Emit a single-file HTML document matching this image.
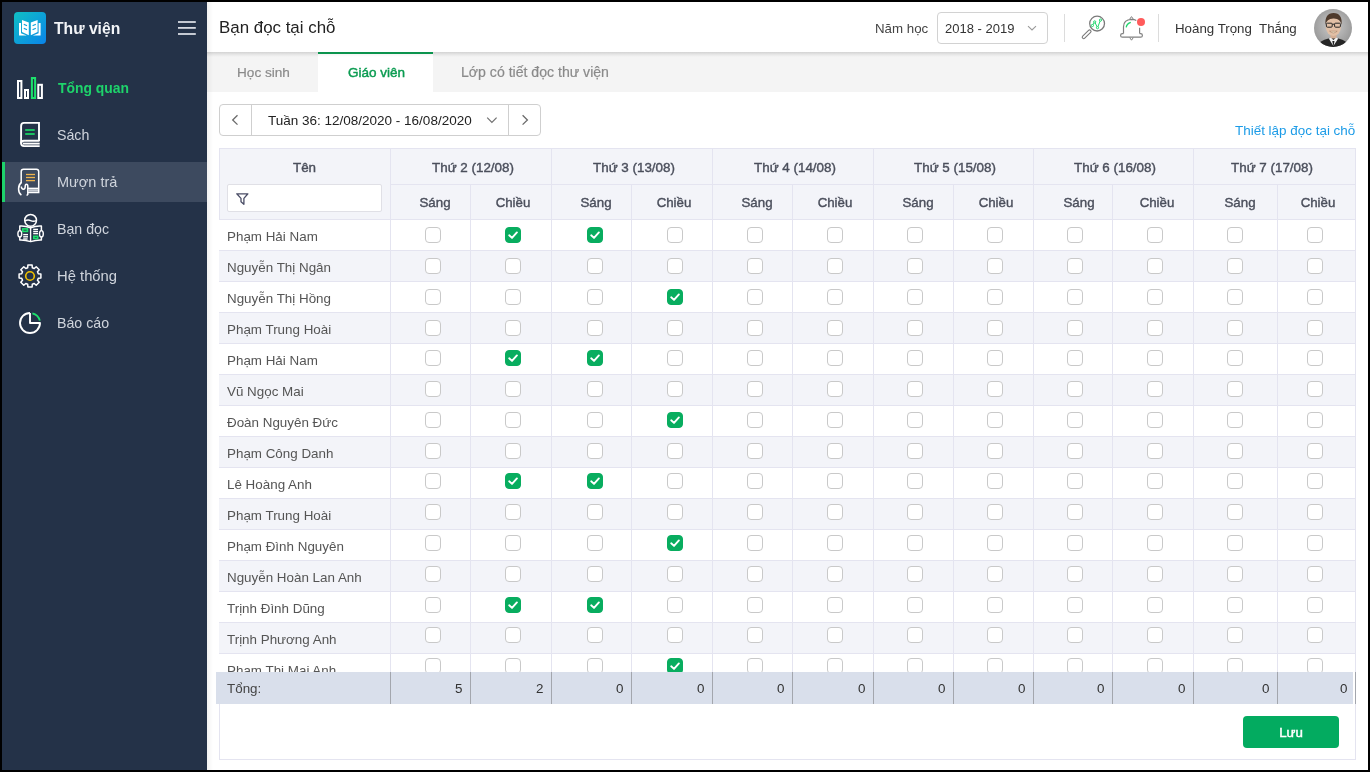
<!DOCTYPE html><html><head><meta charset="utf-8"><title>Bạn đọc tại chỗ</title><style>html,body{margin:0;padding:0}
body{width:1370px;height:772px;background:#000;position:relative;overflow:hidden;font-family:"Liberation Sans",sans-serif;}
.abs{position:absolute}
.txt{position:absolute;white-space:pre;line-height:20px}
#side{position:absolute;left:2px;top:2px;width:205px;height:768px;background:#243248}
#main{position:absolute;left:207px;top:2px;width:1161px;height:768px;background:#fff}
.mi{position:absolute;left:57px;font-size:14.2px;color:#cfd4dc;line-height:20px;white-space:pre}
.active-row{position:absolute;left:2px;top:162px;width:205px;height:40px;background:#3d4a5f}
.active-bar{position:absolute;left:2px;top:162px;width:3px;height:40px;background:#1ed36b}
#hdr{position:absolute;left:207px;top:2px;width:1161px;height:50px;background:#fff;z-index:2}
#tabs{position:absolute;left:207px;top:52px;width:1161px;height:40px;background:#f4f4f4;box-shadow:inset 0 4px 4px -3px rgba(0,0,0,0.10)}
.tab{position:absolute;top:62px;font-size:13.6px;color:#8a8a8a;-webkit-text-stroke:0.2px #8a8a8a;line-height:20px;white-space:pre}
.tabact{position:absolute;left:318px;top:52px;width:115px;height:40px;background:#fff;border-top:2px solid #0c9c52;box-sizing:border-box}
.sidesh{position:absolute;left:207px;top:2px;width:6px;height:768px;background:linear-gradient(to right,rgba(0,0,0,0.05),rgba(0,0,0,0));z-index:3}
.week{position:absolute;left:219px;top:104px;width:322px;height:32px;border:1px solid #cfcfcf;border-radius:4px;box-sizing:border-box;background:#fff}
.card{position:absolute;left:219px;top:148px;width:1137px;height:612px;border:1px solid #e4e4f0;box-sizing:border-box;background:#fff}
.thead{position:absolute;left:220px;top:149px;width:1135px;height:70px;background:#f3f4f9}
.hl{position:absolute;height:1px;background:#e4e4f0}
.vl{position:absolute;width:1px;background:#e4e4f0}
.th{position:absolute;text-align:center;font-size:13.4px;font-weight:normal;-webkit-text-stroke:0.4px #4b4f5c;color:#4b4f5c;line-height:20px;white-space:pre}
.th2{position:absolute;text-align:center;font-size:13.3px;font-weight:normal;-webkit-text-stroke:0.4px #4b4f5c;color:#4b4f5c;line-height:20px;white-space:pre}
.filter{position:absolute;left:227px;top:184px;width:155px;height:28px;border:1px solid #e0e0e6;border-radius:2px;box-sizing:border-box;background:#fff}
.tbody{position:absolute;left:219px;top:219px;width:1137px;height:453px;overflow:hidden}
.row{position:absolute;left:0;width:1136px;height:31px;box-sizing:border-box;border-top:1px solid #e4e4f0;background:#fff}
.row.alt{background:#f3f4f9}
.nm{position:absolute;left:8px;top:7px;font-size:13.4px;color:#555;line-height:20px;white-space:pre}
.cb{position:absolute;top:7px;width:16px;height:16px;box-sizing:border-box;border:1px solid #c9c9c9;border-radius:4px;background:#fff}
.cb.on{background:#08ad5f;border-color:#08ad5f}
.cb svg{position:absolute;left:-1px;top:-1px}
.tfoot{position:absolute;left:216px;top:672px;width:1137px;height:32px;background:#d9dfeb}
.ft{position:absolute;top:6.7px;font-size:13.4px;color:#444;line-height:20px;white-space:pre}
.fv{position:absolute;top:6.7px;font-size:13.4px;color:#333;line-height:20px;white-space:pre}
.fvl{position:absolute;top:0;width:1px;height:32px;background:#a3a6ad}
.btn{position:absolute;left:1243px;top:716px;width:96px;height:32px;background:#03ab60;border-radius:4px;color:#fff;font-weight:normal;-webkit-text-stroke:0.45px #fff;font-size:13.3px;text-align:center;line-height:34px;overflow:hidden}
.txt,.mi,.tab,.th,.th2,.nm,.ft,.fv,.btn{will-change:transform}
</style></head><body>
<div id="side"></div>
<div class="active-row"></div>
<div class="active-bar"></div>
<div class="abs" style="left:14px;top:12px;width:32px;height:32px;border-radius:4px;background:linear-gradient(135deg,#10c0c4,#0a84ea)"></div>
<svg class="abs" style="left:0;top:0" width="207" height="350" viewBox="0 0 207 350">
 <!-- logo book -->
 <g fill="#fff">
  <path d="M22 20 L28.8 22.4 L28.8 35.3 L22 32 Z"/>
  <path d="M37.6 20 L30.8 22.4 L30.8 35.3 L37.6 32 Z"/>
  <path d="M19 23 H21 V33.2 L26.8 35.5 L19 35.5 Z"/>
  <path d="M40.6 23 H38.6 V33.2 L32.8 35.5 L40.6 35.5 Z"/>
 </g>
 <g stroke="#0aa2d8" stroke-width="1.1" fill="none" stroke-linecap="round">
  <path d="M24.2 24.4 L26.6 25.6"/><path d="M24.2 28.4 L26.6 29.6"/>
  <path d="M35.4 24.4 L33 25.6"/><path d="M35.4 28.4 L33 29.6"/>
 </g>
 <!-- hamburger -->
 <g fill="#d6dae1">
  <rect x="178" y="21.1" width="17.8" height="1.8"/>
  <rect x="178" y="27.0" width="17.8" height="1.8"/>
  <rect x="178" y="33.1" width="17.8" height="1.8"/>
 </g>
 <!-- chart -->
 <g fill="none" stroke-width="2">
  <rect x="18" y="81" width="3.4" height="17" stroke="#fff"/>
  <rect x="25" y="90" width="3" height="8" stroke="#fff"/>
  <rect x="31.9" y="78" width="3.2" height="20" stroke="#1de06c"/>
  <rect x="38.3" y="84.8" width="3.6" height="13.2" stroke="#fff"/>
 </g>
 <!-- book (Sach) -->
 <g fill="none" stroke="#fff" stroke-width="1.9">
  <path d="M39 141 V122.9 H24 Q21.1 122.9 21.1 126 V143 Q21.1 146.1 24 146.1 H39.7"/>
  <path d="M21.1 143.5 Q21.1 140.8 24 140.8 H39.5"/>
  <path d="M23 143.6 H39.7"/>
 </g>
 <g stroke="#1cc763" stroke-width="1.9">
  <path d="M25.2 130 H34.7"/><path d="M25.2 134 H34.7"/>
 </g>
 <!-- muon tra -->
 <g fill="none" stroke="#fff" stroke-width="1.5">
  <path d="M21.2 183 V171.6 Q21.2 169.3 23.5 169.3 H36.4 Q38.7 169.3 38.7 171.6 V192.6 H27.6"/>
  <path d="M27.6 188.4 H38.7"/>
  <path d="M21.5 182.5 C17.6 185 17.6 192.5 21.4 195.2"/>
  <path d="M21.3 186.5 Q21.5 189.3 23.4 189.3 Q25.2 189.3 25.2 186.6 Q25.2 184.3 26.5 184.3 Q27.8 184.3 27.8 186.3 V194.5 L26.6 195.5"/>
 </g>
 <rect x="28" y="189.2" width="10" height="2.5" fill="#c8ccd3"/>
 <g stroke="#f0b44c" stroke-width="1.3">
  <path d="M26 174.5 H35"/><path d="M26 177.5 H35"/><path d="M26 180.6 H35"/>
 </g>
 <!-- ban doc -->
 <g fill="none" stroke="#fff" stroke-width="1.5">
  <circle cx="30.6" cy="220.3" r="5.9"/>
  <path d="M24.9 221 Q27.8 219.2 30.6 220.6 Q33.4 222 36.3 220.6"/>
 </g>
 <path d="M19.8 237 V226 Q25.2 225.6 30.6 227.8 Q36 225.6 41.4 226 V240 Q36 239.8 30.6 241.6 Q25.2 239.8 19.8 240 V237 Z" fill="#243248" stroke="#fff" stroke-width="1.5" stroke-linejoin="round"/>
 <g fill="none" stroke="#fff" stroke-width="1.4">
  <path d="M30.6 227.8 V241.6"/>
  <ellipse cx="19.8" cy="233.8" rx="1.9" ry="3.2" fill="#243248"/>
  <ellipse cx="41.4" cy="233.8" rx="1.9" ry="3.2" fill="#243248"/>
  <path d="M23.2 234.6 H28"/><path d="M23.2 236.8 H28"/><path d="M23.2 239 H27.6"/>
  <path d="M33.2 229.4 H38"/><path d="M33.2 231.5 H38"/><path d="M33.2 233.6 H38"/>
 </g>
 <g fill="none" stroke="#1de06c" stroke-width="1.6">
  <rect x="22.7" y="228.9" width="4.8" height="2.5"/>
  <rect x="33.8" y="236.3" width="3.9" height="2.2"/>
 </g>
 <!-- gear -->
 <path d="M27.70 267.71 L27.88 265.10 L32.12 265.10 L32.30 267.71 L34.23 268.51 L36.21 266.80 L39.20 269.79 L37.49 271.77 L38.29 273.70 L40.90 273.88 L40.90 278.12 L38.29 278.30 L37.49 280.23 L39.20 282.21 L36.21 285.20 L34.23 283.49 L32.30 284.29 L32.12 286.90 L27.88 286.90 L27.70 284.29 L25.77 283.49 L23.79 285.20 L20.80 282.21 L22.51 280.23 L21.71 278.30 L19.10 278.12 L19.10 273.88 L21.71 273.70 L22.51 271.77 L20.80 269.79 L23.79 266.80 L25.77 268.51Z" fill="none" stroke="#fff" stroke-width="1.5" stroke-linejoin="round"/>
 <circle cx="30" cy="276" r="4.3" fill="none" stroke="#f2c200" stroke-width="1.6"/>
 <!-- pie -->
 <path d="M30 313 V323 H40 A10 10 0 1 1 30 313" fill="none" stroke="#fff" stroke-width="1.9" stroke-linejoin="round"/>
 <path d="M32.4 313.3 A10 10 0 0 1 39.8 320.6" fill="none" stroke="#1de06c" stroke-width="1.8"/>
</svg>
<div class="txt" style="left:54px;top:19.2px;font-size:15.7px;font-weight:bold;color:#f2f4f7">Thư viện</div>
<div class="mi" style="left:58px;top:78.2px;color:#1ed36b;font-weight:bold;font-size:13.9px">Tổng quan</div>
<div class="mi" style="top:124.9px">Sách</div>
<div class="mi" style="top:171.9px;font-size:14.5px">Mượn trả</div>
<div class="mi" style="top:219px">Bạn đọc</div>
<div class="mi" style="top:266.3px;font-size:14.8px">Hệ thống</div>
<div class="mi" style="top:312.9px">Báo cáo</div>

<div id="main"></div>
<div id="tabs"></div>
<div class="tabact"></div>
<div id="hdr"></div>
<div class="abs" style="left:207px;top:52px;width:1161px;height:5px;background:linear-gradient(to bottom,rgba(0,0,0,0.07),rgba(0,0,0,0));z-index:2"></div>
<div class="sidesh"></div>
<div class="txt" style="left:219px;top:17.9px;font-size:16.9px;color:#222;z-index:3">Bạn đọc tại chỗ</div>
<div class="txt" style="left:874.6px;top:18.8px;font-size:13.3px;color:#444;z-index:3">Năm học</div>
<div class="abs" style="left:937px;top:12px;width:111px;height:32px;border:1px solid #d2d2d2;border-radius:4px;box-sizing:border-box;z-index:3"></div>
<div class="txt" style="left:945.4px;top:18.9px;font-size:13px;color:#333;z-index:3">2018 - 2019</div>
<div class="abs" style="left:1064px;top:14px;width:1px;height:28px;background:#dcdcdc;z-index:3"></div>
<div class="abs" style="left:1158px;top:14px;width:1px;height:28px;background:#dcdcdc;z-index:3"></div>
<div class="txt" style="left:1175.4px;top:19.4px;font-size:13.3px;color:#333;z-index:3">Hoàng Trọng  Thắng</div>
<svg class="abs" style="left:900px;top:0;z-index:4" width="470" height="52" viewBox="900 0 470 52">
 <path d="M1028 26.2 L1032 30 L1036 26.2" fill="none" stroke="#9a9a9a" stroke-width="1.1"/>
 <!-- search -->
 <circle cx="1097.1" cy="23.6" r="7.4" fill="none" stroke="#7a7a7a" stroke-width="1.3"/>
 <rect x="-1.45" y="0" width="2.9" height="11.2" rx="1.45" transform="translate(1090.6 30.3) rotate(45)" fill="none" stroke="#7a7a7a" stroke-width="1.1"/>
 <path d="M1092.4 25.5 L1094.7 21.9 L1097.5 27.7 L1100.5 20.1" fill="none" stroke="#1fd66c" stroke-width="1"/>
 <g fill="#fff" stroke="#1fd66c" stroke-width="1"><circle cx="1092.4" cy="25.5" r="1.1"/><circle cx="1094.7" cy="21.9" r="1.1"/><circle cx="1097.5" cy="27.7" r="1.1"/><circle cx="1100.5" cy="20.1" r="1.1"/></g>
 <!-- bell -->
 <path d="M1123.5 33.4 V26.8 Q1123.5 19.6 1131.5 19.3 Q1134.6 19.4 1136.3 20.4" fill="none" stroke="#808080" stroke-width="1.2"/>
 <path d="M1139.6 27.8 V33.4" fill="none" stroke="#808080" stroke-width="1.2"/>
 <path d="M1129.9 18.8 L1131.5 16.6 L1133.1 18.8 L1131.5 19.6 Z" fill="none" stroke="#808080" stroke-width="1"/>
 <path d="M1123.5 33.6 H1122.4 Q1120.6 33.6 1120.6 35.4 Q1120.6 37.2 1122.4 37.2 H1140.6 Q1142.4 37.2 1142.4 35.4 Q1142.4 33.6 1140.6 33.6 H1139.6" fill="none" stroke="#808080" stroke-width="1.2"/>
 <path d="M1129.7 37.6 L1131.5 40.2 L1133.3 37.6" fill="none" stroke="#808080" stroke-width="1"/>
 <path d="M1126.2 27.4 Q1126.8 23.4 1130.8 22.3" fill="none" stroke="#1fd66c" stroke-width="1.3"/>
 <circle cx="1141" cy="22" r="4" fill="#ff5b5b"/>
 <!-- avatar -->
 <defs><clipPath id="av"><circle cx="1333" cy="28" r="19"/></clipPath>
 <radialGradient id="avbg" cx="0.5" cy="0.45" r="0.6"><stop offset="0" stop-color="#cdcdcd"/><stop offset="1" stop-color="#939393"/></radialGradient></defs>
 <g clip-path="url(#av)">
  <rect x="1314" y="9" width="38" height="38" fill="url(#avbg)"/>
  <rect x="1330.5" y="33" width="6" height="7" fill="#d4ae94"/>
  <path d="M1316 48 Q1319 40.5 1328.5 38.6 L1338.5 38.6 Q1347.5 40.5 1350 48 Z" fill="#262626"/>
  <path d="M1328.8 38.6 L1333.4 46 L1338.2 38.6 L1336 37.8 L1333.4 40 L1331 37.8 Z" fill="#f4f4f4"/>
  <path d="M1332.3 41 L1333.4 47 L1334.5 41 Z" fill="#1e1e1e"/>
  <ellipse cx="1333.4" cy="26.2" rx="7.6" ry="9.8" fill="#e2c0a6"/>
  <path d="M1325.4 25 Q1324.6 13.2 1333.6 13 Q1342.6 13.3 1341.6 25 Q1340.6 18.2 1333.6 18.4 Q1326.6 18.2 1325.4 25 Z" fill="#4e3a2c"/>
  <g fill="none" stroke="#262626" stroke-width="1"><rect x="1326.4" y="23.2" width="5.8" height="4" rx="1"/><rect x="1334.6" y="23.2" width="5.8" height="4" rx="1"/><path d="M1332.2 24.2 H1334.6"/></g>
  <path d="M1329.6 31.2 Q1333.4 34.6 1337.2 31.2 Z" fill="#f3ecd2" stroke="#9a6a50" stroke-width="0.5"/>
 </g>
</svg>
<div class="tab" style="left:236.6px;top:62.8px">Học sinh</div>
<div class="tab" style="left:347.6px;color:#0c9c52;-webkit-text-stroke:0.45px #0c9c52;font-size:13.5px;top:62.5px">Giáo viên</div>
<div class="tab" style="left:461px;font-size:14.1px;top:61.8px">Lớp có tiết đọc thư viện</div>
<div class="week"></div>
<div class="abs" style="left:251px;top:104px;width:1px;height:32px;background:#cfcfcf"></div>
<div class="abs" style="left:508px;top:104px;width:1px;height:32px;background:#cfcfcf"></div>
<div class="txt" style="left:268.3px;top:111.2px;font-size:13.5px;color:#222">Tuần 36: 12/08/2020 - 16/08/2020</div>
<svg class="abs" style="left:219px;top:104px" width="322" height="32" viewBox="219 104 322 32">
 <path d="M237.5 115.3 L232.7 120 L237.5 124.6" fill="none" stroke="#6a6a6a" stroke-width="1.3"/>
 <path d="M522.6 115.3 L527.4 120 L522.6 124.6" fill="none" stroke="#6a6a6a" stroke-width="1.3"/>
 <path d="M487.2 117.6 L491.9 122.3 L496.6 117.6" fill="none" stroke="#707070" stroke-width="1.2"/>
</svg>
<div class="txt" style="left:1234.7px;top:120.8px;font-size:13.45px;color:#1b9be7">Thiết lập đọc tại chỗ</div>

<div class="card"></div><div class="thead"></div><div class="hl" style="left:390px;top:184px;width:965px"></div><div class="hl" style="left:219px;top:219px;width:1136px"></div><div class="vl" style="left:390px;top:148px;height:71px"></div><div class="vl" style="left:470px;top:184px;height:35px"></div><div class="vl" style="left:551px;top:148px;height:71px"></div><div class="vl" style="left:631px;top:184px;height:35px"></div><div class="vl" style="left:712px;top:148px;height:71px"></div><div class="vl" style="left:792px;top:184px;height:35px"></div><div class="vl" style="left:873px;top:148px;height:71px"></div><div class="vl" style="left:953px;top:184px;height:35px"></div><div class="vl" style="left:1033px;top:148px;height:71px"></div><div class="vl" style="left:1112px;top:184px;height:35px"></div><div class="vl" style="left:1193px;top:148px;height:71px"></div><div class="vl" style="left:1277px;top:184px;height:35px"></div><div class="th" style="left:219px;width:171px;top:158px">Tên</div><div class="filter"><svg width="14" height="14" viewBox="0 0 14 14" style="position:absolute;left:8px;top:7px"><path d="M0.8 1.8 H11.9 L7.9 6.4 V12.3 L5.0 9.7 V6.4 Z" fill="none" stroke="#4a4d66" stroke-width="1.3" stroke-linejoin="round"/></svg></div><div class="th" style="left:413.4px;width:120px;top:158px">Thứ 2 (12/08)</div><div class="th2" style="left:394.9px;width:80px;top:192.7px">Sáng</div><div class="th2" style="left:473.0px;width:80px;top:192.7px">Chiều</div><div class="th" style="left:574.3px;width:120px;top:158px">Thứ 3 (13/08)</div><div class="th2" style="left:556.0px;width:80px;top:192.7px">Sáng</div><div class="th2" style="left:634.0px;width:80px;top:192.7px">Chiều</div><div class="th" style="left:735.2px;width:120px;top:158px">Thứ 4 (14/08)</div><div class="th2" style="left:717.3px;width:80px;top:192.7px">Sáng</div><div class="th2" style="left:795.2px;width:80px;top:192.7px">Chiều</div><div class="th" style="left:895.0px;width:120px;top:158px">Thứ 5 (15/08)</div><div class="th2" style="left:878.1px;width:80px;top:192.7px">Sáng</div><div class="th2" style="left:956.3px;width:80px;top:192.7px">Chiều</div><div class="th" style="left:1055.0px;width:120px;top:158px">Thứ 6 (16/08)</div><div class="th2" style="left:1038.9px;width:80px;top:192.7px">Sáng</div><div class="th2" style="left:1117.0px;width:80px;top:192.7px">Chiều</div><div class="th" style="left:1212.3px;width:120px;top:158px">Thứ 7 (17/08)</div><div class="th2" style="left:1199.9px;width:80px;top:192.7px">Sáng</div><div class="th2" style="left:1278.0px;width:80px;top:192.7px">Chiều</div><div class="tbody"><div class="row" style="top:0px"><div class="nm">Phạm Hải Nam</div><div class="cb" style="left:206.0px;top:7.30px"></div><div class="cb on" style="left:286.0px;top:7.30px"><svg width="16" height="16" viewBox="0 0 16 16"><path d="M4.2 8.3 L7 10.9 L11.9 5.4" fill="none" stroke="#fff" stroke-width="1.9" stroke-linecap="round" stroke-linejoin="round"/></svg></div><div class="cb on" style="left:368.0px;top:7.30px"><svg width="16" height="16" viewBox="0 0 16 16"><path d="M4.2 8.3 L7 10.9 L11.9 5.4" fill="none" stroke="#fff" stroke-width="1.9" stroke-linecap="round" stroke-linejoin="round"/></svg></div><div class="cb" style="left:448.0px;top:7.30px"></div><div class="cb" style="left:528.0px;top:7.30px"></div><div class="cb" style="left:608.0px;top:7.30px"></div><div class="cb" style="left:688.0px;top:7.30px"></div><div class="cb" style="left:768.0px;top:7.30px"></div><div class="cb" style="left:848.0px;top:7.30px"></div><div class="cb" style="left:928.0px;top:7.30px"></div><div class="cb" style="left:1008.0px;top:7.30px"></div><div class="cb" style="left:1088.0px;top:7.30px"></div></div><div class="row alt" style="top:31px"><div class="nm">Nguyễn Thị Ngân</div><div class="cb" style="left:206.0px;top:7.07px"></div><div class="cb" style="left:286.0px;top:7.07px"></div><div class="cb" style="left:368.0px;top:7.07px"></div><div class="cb" style="left:448.0px;top:7.07px"></div><div class="cb" style="left:528.0px;top:7.07px"></div><div class="cb" style="left:608.0px;top:7.07px"></div><div class="cb" style="left:688.0px;top:7.07px"></div><div class="cb" style="left:768.0px;top:7.07px"></div><div class="cb" style="left:848.0px;top:7.07px"></div><div class="cb" style="left:928.0px;top:7.07px"></div><div class="cb" style="left:1008.0px;top:7.07px"></div><div class="cb" style="left:1088.0px;top:7.07px"></div></div><div class="row" style="top:62px"><div class="nm">Nguyễn Thị Hồng</div><div class="cb" style="left:206.0px;top:6.84px"></div><div class="cb" style="left:286.0px;top:6.84px"></div><div class="cb" style="left:368.0px;top:6.84px"></div><div class="cb on" style="left:448.0px;top:6.84px"><svg width="16" height="16" viewBox="0 0 16 16"><path d="M4.2 8.3 L7 10.9 L11.9 5.4" fill="none" stroke="#fff" stroke-width="1.9" stroke-linecap="round" stroke-linejoin="round"/></svg></div><div class="cb" style="left:528.0px;top:6.84px"></div><div class="cb" style="left:608.0px;top:6.84px"></div><div class="cb" style="left:688.0px;top:6.84px"></div><div class="cb" style="left:768.0px;top:6.84px"></div><div class="cb" style="left:848.0px;top:6.84px"></div><div class="cb" style="left:928.0px;top:6.84px"></div><div class="cb" style="left:1008.0px;top:6.84px"></div><div class="cb" style="left:1088.0px;top:6.84px"></div></div><div class="row alt" style="top:93px"><div class="nm">Phạm Trung Hoài</div><div class="cb" style="left:206.0px;top:6.61px"></div><div class="cb" style="left:286.0px;top:6.61px"></div><div class="cb" style="left:368.0px;top:6.61px"></div><div class="cb" style="left:448.0px;top:6.61px"></div><div class="cb" style="left:528.0px;top:6.61px"></div><div class="cb" style="left:608.0px;top:6.61px"></div><div class="cb" style="left:688.0px;top:6.61px"></div><div class="cb" style="left:768.0px;top:6.61px"></div><div class="cb" style="left:848.0px;top:6.61px"></div><div class="cb" style="left:928.0px;top:6.61px"></div><div class="cb" style="left:1008.0px;top:6.61px"></div><div class="cb" style="left:1088.0px;top:6.61px"></div></div><div class="row" style="top:124px"><div class="nm">Phạm Hải Nam</div><div class="cb" style="left:206.0px;top:6.38px"></div><div class="cb on" style="left:286.0px;top:6.38px"><svg width="16" height="16" viewBox="0 0 16 16"><path d="M4.2 8.3 L7 10.9 L11.9 5.4" fill="none" stroke="#fff" stroke-width="1.9" stroke-linecap="round" stroke-linejoin="round"/></svg></div><div class="cb on" style="left:368.0px;top:6.38px"><svg width="16" height="16" viewBox="0 0 16 16"><path d="M4.2 8.3 L7 10.9 L11.9 5.4" fill="none" stroke="#fff" stroke-width="1.9" stroke-linecap="round" stroke-linejoin="round"/></svg></div><div class="cb" style="left:448.0px;top:6.38px"></div><div class="cb" style="left:528.0px;top:6.38px"></div><div class="cb" style="left:608.0px;top:6.38px"></div><div class="cb" style="left:688.0px;top:6.38px"></div><div class="cb" style="left:768.0px;top:6.38px"></div><div class="cb" style="left:848.0px;top:6.38px"></div><div class="cb" style="left:928.0px;top:6.38px"></div><div class="cb" style="left:1008.0px;top:6.38px"></div><div class="cb" style="left:1088.0px;top:6.38px"></div></div><div class="row alt" style="top:155px"><div class="nm">Vũ Ngọc Mai</div><div class="cb" style="left:206.0px;top:6.15px"></div><div class="cb" style="left:286.0px;top:6.15px"></div><div class="cb" style="left:368.0px;top:6.15px"></div><div class="cb" style="left:448.0px;top:6.15px"></div><div class="cb" style="left:528.0px;top:6.15px"></div><div class="cb" style="left:608.0px;top:6.15px"></div><div class="cb" style="left:688.0px;top:6.15px"></div><div class="cb" style="left:768.0px;top:6.15px"></div><div class="cb" style="left:848.0px;top:6.15px"></div><div class="cb" style="left:928.0px;top:6.15px"></div><div class="cb" style="left:1008.0px;top:6.15px"></div><div class="cb" style="left:1088.0px;top:6.15px"></div></div><div class="row" style="top:186px"><div class="nm">Đoàn Nguyên Đức</div><div class="cb" style="left:206.0px;top:5.92px"></div><div class="cb" style="left:286.0px;top:5.92px"></div><div class="cb" style="left:368.0px;top:5.92px"></div><div class="cb on" style="left:448.0px;top:5.92px"><svg width="16" height="16" viewBox="0 0 16 16"><path d="M4.2 8.3 L7 10.9 L11.9 5.4" fill="none" stroke="#fff" stroke-width="1.9" stroke-linecap="round" stroke-linejoin="round"/></svg></div><div class="cb" style="left:528.0px;top:5.92px"></div><div class="cb" style="left:608.0px;top:5.92px"></div><div class="cb" style="left:688.0px;top:5.92px"></div><div class="cb" style="left:768.0px;top:5.92px"></div><div class="cb" style="left:848.0px;top:5.92px"></div><div class="cb" style="left:928.0px;top:5.92px"></div><div class="cb" style="left:1008.0px;top:5.92px"></div><div class="cb" style="left:1088.0px;top:5.92px"></div></div><div class="row alt" style="top:217px"><div class="nm">Phạm Công Danh</div><div class="cb" style="left:206.0px;top:5.69px"></div><div class="cb" style="left:286.0px;top:5.69px"></div><div class="cb" style="left:368.0px;top:5.69px"></div><div class="cb" style="left:448.0px;top:5.69px"></div><div class="cb" style="left:528.0px;top:5.69px"></div><div class="cb" style="left:608.0px;top:5.69px"></div><div class="cb" style="left:688.0px;top:5.69px"></div><div class="cb" style="left:768.0px;top:5.69px"></div><div class="cb" style="left:848.0px;top:5.69px"></div><div class="cb" style="left:928.0px;top:5.69px"></div><div class="cb" style="left:1008.0px;top:5.69px"></div><div class="cb" style="left:1088.0px;top:5.69px"></div></div><div class="row" style="top:248px"><div class="nm">Lê Hoàng Anh</div><div class="cb" style="left:206.0px;top:5.46px"></div><div class="cb on" style="left:286.0px;top:5.46px"><svg width="16" height="16" viewBox="0 0 16 16"><path d="M4.2 8.3 L7 10.9 L11.9 5.4" fill="none" stroke="#fff" stroke-width="1.9" stroke-linecap="round" stroke-linejoin="round"/></svg></div><div class="cb on" style="left:368.0px;top:5.46px"><svg width="16" height="16" viewBox="0 0 16 16"><path d="M4.2 8.3 L7 10.9 L11.9 5.4" fill="none" stroke="#fff" stroke-width="1.9" stroke-linecap="round" stroke-linejoin="round"/></svg></div><div class="cb" style="left:448.0px;top:5.46px"></div><div class="cb" style="left:528.0px;top:5.46px"></div><div class="cb" style="left:608.0px;top:5.46px"></div><div class="cb" style="left:688.0px;top:5.46px"></div><div class="cb" style="left:768.0px;top:5.46px"></div><div class="cb" style="left:848.0px;top:5.46px"></div><div class="cb" style="left:928.0px;top:5.46px"></div><div class="cb" style="left:1008.0px;top:5.46px"></div><div class="cb" style="left:1088.0px;top:5.46px"></div></div><div class="row alt" style="top:279px"><div class="nm">Phạm Trung Hoài</div><div class="cb" style="left:206.0px;top:5.23px"></div><div class="cb" style="left:286.0px;top:5.23px"></div><div class="cb" style="left:368.0px;top:5.23px"></div><div class="cb" style="left:448.0px;top:5.23px"></div><div class="cb" style="left:528.0px;top:5.23px"></div><div class="cb" style="left:608.0px;top:5.23px"></div><div class="cb" style="left:688.0px;top:5.23px"></div><div class="cb" style="left:768.0px;top:5.23px"></div><div class="cb" style="left:848.0px;top:5.23px"></div><div class="cb" style="left:928.0px;top:5.23px"></div><div class="cb" style="left:1008.0px;top:5.23px"></div><div class="cb" style="left:1088.0px;top:5.23px"></div></div><div class="row" style="top:310px"><div class="nm">Phạm Đình Nguyên</div><div class="cb" style="left:206.0px;top:5.00px"></div><div class="cb" style="left:286.0px;top:5.00px"></div><div class="cb" style="left:368.0px;top:5.00px"></div><div class="cb on" style="left:448.0px;top:5.00px"><svg width="16" height="16" viewBox="0 0 16 16"><path d="M4.2 8.3 L7 10.9 L11.9 5.4" fill="none" stroke="#fff" stroke-width="1.9" stroke-linecap="round" stroke-linejoin="round"/></svg></div><div class="cb" style="left:528.0px;top:5.00px"></div><div class="cb" style="left:608.0px;top:5.00px"></div><div class="cb" style="left:688.0px;top:5.00px"></div><div class="cb" style="left:768.0px;top:5.00px"></div><div class="cb" style="left:848.0px;top:5.00px"></div><div class="cb" style="left:928.0px;top:5.00px"></div><div class="cb" style="left:1008.0px;top:5.00px"></div><div class="cb" style="left:1088.0px;top:5.00px"></div></div><div class="row alt" style="top:341px"><div class="nm">Nguyễn Hoàn Lan Anh</div><div class="cb" style="left:206.0px;top:4.77px"></div><div class="cb" style="left:286.0px;top:4.77px"></div><div class="cb" style="left:368.0px;top:4.77px"></div><div class="cb" style="left:448.0px;top:4.77px"></div><div class="cb" style="left:528.0px;top:4.77px"></div><div class="cb" style="left:608.0px;top:4.77px"></div><div class="cb" style="left:688.0px;top:4.77px"></div><div class="cb" style="left:768.0px;top:4.77px"></div><div class="cb" style="left:848.0px;top:4.77px"></div><div class="cb" style="left:928.0px;top:4.77px"></div><div class="cb" style="left:1008.0px;top:4.77px"></div><div class="cb" style="left:1088.0px;top:4.77px"></div></div><div class="row" style="top:372px"><div class="nm">Trịnh Đình Dũng</div><div class="cb" style="left:206.0px;top:4.54px"></div><div class="cb on" style="left:286.0px;top:4.54px"><svg width="16" height="16" viewBox="0 0 16 16"><path d="M4.2 8.3 L7 10.9 L11.9 5.4" fill="none" stroke="#fff" stroke-width="1.9" stroke-linecap="round" stroke-linejoin="round"/></svg></div><div class="cb on" style="left:368.0px;top:4.54px"><svg width="16" height="16" viewBox="0 0 16 16"><path d="M4.2 8.3 L7 10.9 L11.9 5.4" fill="none" stroke="#fff" stroke-width="1.9" stroke-linecap="round" stroke-linejoin="round"/></svg></div><div class="cb" style="left:448.0px;top:4.54px"></div><div class="cb" style="left:528.0px;top:4.54px"></div><div class="cb" style="left:608.0px;top:4.54px"></div><div class="cb" style="left:688.0px;top:4.54px"></div><div class="cb" style="left:768.0px;top:4.54px"></div><div class="cb" style="left:848.0px;top:4.54px"></div><div class="cb" style="left:928.0px;top:4.54px"></div><div class="cb" style="left:1008.0px;top:4.54px"></div><div class="cb" style="left:1088.0px;top:4.54px"></div></div><div class="row alt" style="top:403px"><div class="nm">Trịnh Phương Anh</div><div class="cb" style="left:206.0px;top:4.31px"></div><div class="cb" style="left:286.0px;top:4.31px"></div><div class="cb" style="left:368.0px;top:4.31px"></div><div class="cb" style="left:448.0px;top:4.31px"></div><div class="cb" style="left:528.0px;top:4.31px"></div><div class="cb" style="left:608.0px;top:4.31px"></div><div class="cb" style="left:688.0px;top:4.31px"></div><div class="cb" style="left:768.0px;top:4.31px"></div><div class="cb" style="left:848.0px;top:4.31px"></div><div class="cb" style="left:928.0px;top:4.31px"></div><div class="cb" style="left:1008.0px;top:4.31px"></div><div class="cb" style="left:1088.0px;top:4.31px"></div></div><div class="row" style="top:434px"><div class="nm">Phạm Thị Mai Anh</div><div class="cb" style="left:206.0px;top:4.08px"></div><div class="cb" style="left:286.0px;top:4.08px"></div><div class="cb" style="left:368.0px;top:4.08px"></div><div class="cb on" style="left:448.0px;top:4.08px"><svg width="16" height="16" viewBox="0 0 16 16"><path d="M4.2 8.3 L7 10.9 L11.9 5.4" fill="none" stroke="#fff" stroke-width="1.9" stroke-linecap="round" stroke-linejoin="round"/></svg></div><div class="cb" style="left:528.0px;top:4.08px"></div><div class="cb" style="left:608.0px;top:4.08px"></div><div class="cb" style="left:688.0px;top:4.08px"></div><div class="cb" style="left:768.0px;top:4.08px"></div><div class="cb" style="left:848.0px;top:4.08px"></div><div class="cb" style="left:928.0px;top:4.08px"></div><div class="cb" style="left:1008.0px;top:4.08px"></div><div class="cb" style="left:1088.0px;top:4.08px"></div></div><div class="vl" style="left:171px;top:0;height:460px"></div><div class="vl" style="left:251px;top:0;height:460px"></div><div class="vl" style="left:332px;top:0;height:460px"></div><div class="vl" style="left:412px;top:0;height:460px"></div><div class="vl" style="left:493px;top:0;height:460px"></div><div class="vl" style="left:573px;top:0;height:460px"></div><div class="vl" style="left:654px;top:0;height:460px"></div><div class="vl" style="left:734px;top:0;height:460px"></div><div class="vl" style="left:814px;top:0;height:460px"></div><div class="vl" style="left:893px;top:0;height:460px"></div><div class="vl" style="left:974px;top:0;height:460px"></div><div class="vl" style="left:1058px;top:0;height:460px"></div></div><div class="tfoot"><div class="ft" style="left:11px">Tổng:</div><div class="fv" style="right:891px">5</div><div class="fv" style="right:810px">2</div><div class="fv" style="right:730px">0</div><div class="fv" style="right:649px">0</div><div class="fv" style="right:569px">0</div><div class="fv" style="right:488px">0</div><div class="fv" style="right:408px">0</div><div class="fv" style="right:328px">0</div><div class="fv" style="right:249px">0</div><div class="fv" style="right:168px">0</div><div class="fv" style="right:84px">0</div><div class="fv" style="right:6px">0</div><div class="fvl" style="left:174px"></div><div class="fvl" style="left:254px"></div><div class="fvl" style="left:335px"></div><div class="fvl" style="left:415px"></div><div class="fvl" style="left:496px"></div><div class="fvl" style="left:576px"></div><div class="fvl" style="left:657px"></div><div class="fvl" style="left:737px"></div><div class="fvl" style="left:817px"></div><div class="fvl" style="left:896px"></div><div class="fvl" style="left:977px"></div><div class="fvl" style="left:1061px"></div><div class="fvl" style="left:1139px"></div></div><div class="btn">Lưu</div>
</body></html>
